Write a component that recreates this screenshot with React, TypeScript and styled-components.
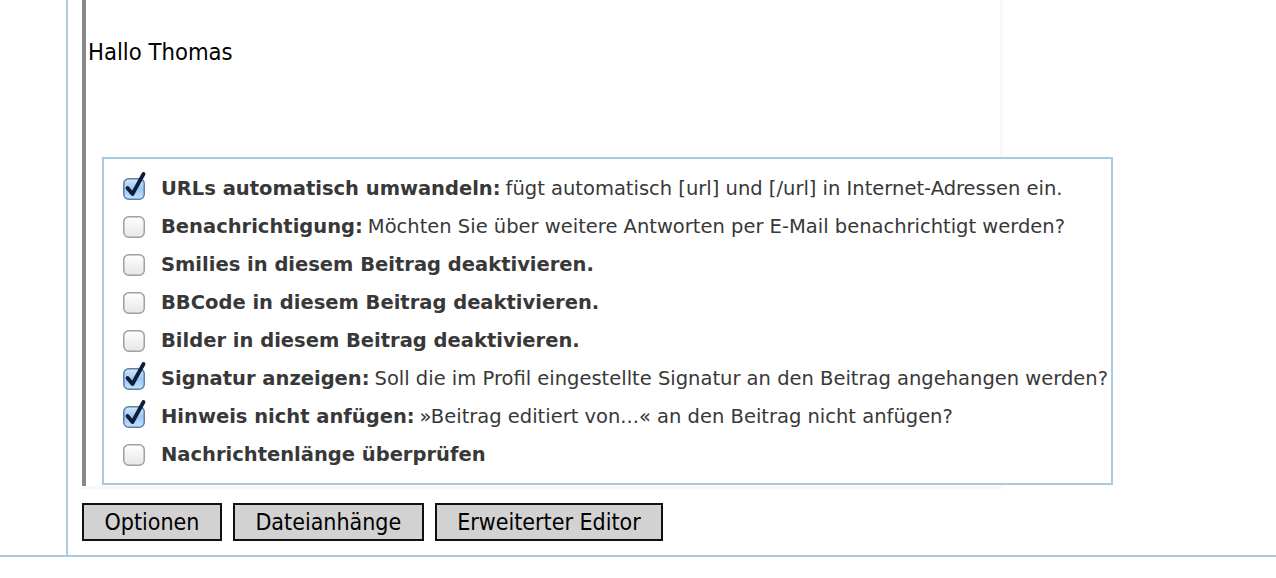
import React from "react";
import styled, { createGlobalStyle } from "styled-components";

const Global = createGlobalStyle`
  html, body { margin: 0; padding: 0; background: #ffffff; }
  body { font-family: "DejaVu Sans", Verdana, sans-serif; overflow: hidden; }
`;

const Page = styled.div`
  width: 1276px;
  height: 578px;
  overflow: hidden;
`;

const Frame = styled.div`
  border-bottom: 2px solid #a8cbe4;
  height: 557px;
  box-sizing: border-box;
`;

const Column = styled.div`
  margin-left: 66px;
  height: 100%;
  border-left: 2px solid #a8cbe4;
  padding-left: 14px;
  box-sizing: border-box;
`;

const Editor = styled.div`
  width: 921px;
  height: 489px;
  box-sizing: border-box;
  background: #ffffff;
  border-right: 3px solid #f8f8f8;
  border-bottom: 3px solid #f8f8f8;
  display: flex;
  flex-direction: column;
`;

const EditArea = styled.div`
  flex: 1;
  border-left: 4px solid #888888;
  padding-left: 2px;
  display: flex;
  flex-direction: column;
  font-family: "DejaVu Sans Condensed", "DejaVu Sans", Tahoma, sans-serif;
  font-size: 23.6px;
  line-height: 31px;
  color: #000;
`;

const Line = styled.div<{ $shift?: number }>`
  white-space: pre;
  margin-top: ${(p) => p.$shift ?? 0}px;
`;

const Faded = styled.span`
  color: #d0d0d0;
`;

const Options = styled.div`
  margin-top: 89px;
  margin-left: 14px;
  width: 1011px;
  height: 328px;
  flex: none;
  box-sizing: border-box;
  border: 2px solid #a8cbe4;
  background: #fff;
  padding: 11px 0 9px 19px;
  display: flex;
  flex-direction: column;
  font-family: "DejaVu Sans", Verdana, sans-serif;
  font-size: 19.5px;
  line-height: 24px;
  color: #383838;
`;

const Row = styled.label`
  height: 38px;
  display: flex;
  align-items: center;
  gap: 16px;
  white-space: nowrap;
`;

const Strong = styled.b`
  font-weight: bold;
  margin-right: 5px;
`;

const BoxWrap = styled.span`
  width: 22px;
  height: 22px;
  flex: none;
  display: inline-flex;
  position: relative;
`;

const Buttons = styled.div`
  margin-top: 14px;
  display: flex;
  gap: 11px;
`;

const Button = styled.button`
  height: 38px;
  box-sizing: border-box;
  border: 2px solid #111;
  background: #d2d2d2;
  padding: 0 20.5px;
  font-family: "DejaVu Sans Condensed", "DejaVu Sans", Tahoma, sans-serif;
  font-size: 23px;
  color: #000;
  border-radius: 0;
`;

function Checkbox({ checked }: { checked: boolean }) {
  return (
    <BoxWrap>
      <svg width="26" height="30" viewBox="0 0 26 30" style={{ position: "absolute", left: 0, top: -7, overflow: "visible" }}>
        <defs>
          <linearGradient id="cbOff" x1="0" y1="0" x2="0" y2="1">
            <stop offset="0" stopColor="#ffffff" />
            <stop offset="1" stopColor="#e6e6e6" />
          </linearGradient>
          <linearGradient id="cbOn" x1="0" y1="0" x2="0" y2="1">
            <stop offset="0" stopColor="#d5e8fb" />
            <stop offset="0.5" stopColor="#9cc6f2" />
            <stop offset="1" stopColor="#c6e2fc" />
          </linearGradient>
        </defs>
        <rect
          x="0.75"
          y="7.75"
          width="20.5"
          height="20.5"
          rx="5"
          fill={checked ? "url(#cbOn)" : "url(#cbOff)"}
          stroke={checked ? "#5d7fa8" : "#a0a0a0"}
          strokeWidth="1.5"
        />
        {checked && (
          <path
            d="M4.5 17 L9.5 23 L20.5 3"
            fill="none"
            stroke="#0d1e3a"
            strokeWidth="3.8"
            strokeLinecap="round"
            strokeLinejoin="round"
          />
        )}
      </svg>
    </BoxWrap>
  );
}

const items: { checked: boolean; label: string; text?: string }[] = [
  { checked: true, label: "URLs automatisch umwandeln:", text: "fügt automatisch [url] und [/url] in Internet-Adressen ein." },
  { checked: false, label: "Benachrichtigung:", text: "Möchten Sie über weitere Antworten per E-Mail benachrichtigt werden?" },
  { checked: false, label: "Smilies in diesem Beitrag deaktivieren." },
  { checked: false, label: "BBCode in diesem Beitrag deaktivieren." },
  { checked: false, label: "Bilder in diesem Beitrag deaktivieren." },
  { checked: true, label: "Signatur anzeigen:", text: "Soll die im Profil eingestellte Signatur an den Beitrag angehangen werden?" },
  { checked: true, label: "Hinweis nicht anfügen:", text: "»Beitrag editiert von...« an den Beitrag nicht anfügen?" },
  { checked: false, label: "Nachrichtenlänge überprüfen" },
];

export default function App() {
  return (
    <Page>
      <Global />
      <Frame>
        <Column>
          <Editor>
            <EditArea>
              <Line $shift={-28}>
                <Faded>        Thomas  hat geschrieben:  </Faded>[quote]
              </Line>
              <Line>{" "}</Line>
              <Line $shift={3}>Hallo Thomas</Line>
              <Options>
                {items.map((it, i) => (
                  <Row key={i}>
                    <Checkbox checked={it.checked} />
                    <span>
                      <Strong>{it.label}</Strong>
                      {it.text}
                    </span>
                  </Row>
                ))}
              </Options>
            </EditArea>
          </Editor>
          <Buttons>
            <Button>Optionen</Button>
            <Button>Dateianhänge</Button>
            <Button>Erweiterter Editor</Button>
          </Buttons>
        </Column>
      </Frame>
    </Page>
  );
}
